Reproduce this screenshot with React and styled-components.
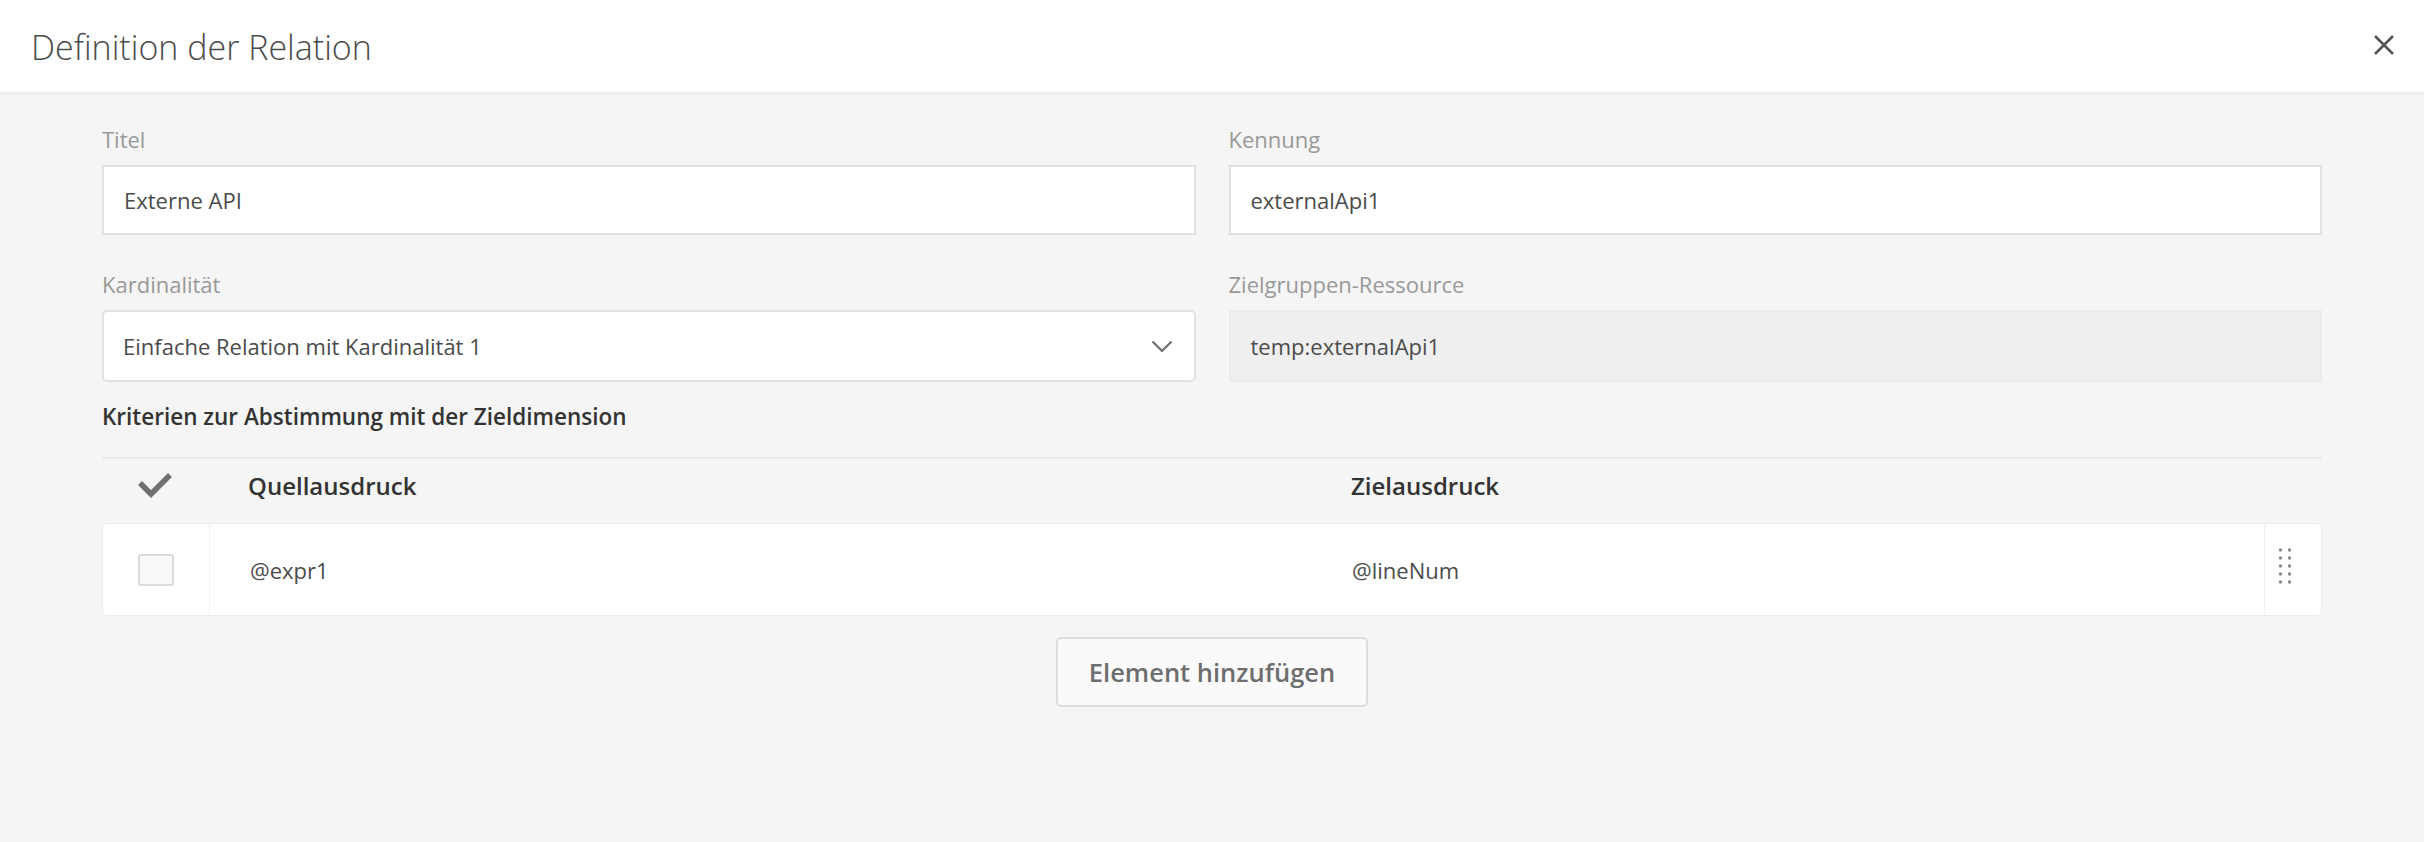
import React from "react";
import styled, { createGlobalStyle } from "styled-components";

const GlobalStyle = createGlobalStyle`
  * { box-sizing: border-box; }
  html, body {
    margin: 0;
    padding: 0;
    background: #f5f5f5;
  }
  body {
    font-family: "Open Sans", "Noto Sans", sans-serif;
    color: #4b4b4b;
  }
`;

const columns = [
  { key: "source", title: "Quellausdruck" },
  { key: "target", title: "Zielausdruck" },
];

const rows = [{ id: 1, source: "@expr1", target: "@lineNum" }];

const CloseIcon = () => (
  <svg width="22" height="22" viewBox="0 0 22 22">
    <path d="M2 2 L20 20 M20 2 L2 20" stroke="#555" strokeWidth="2.6" fill="none" />
  </svg>
);

const Chevron = () => (
  <svg width="22" height="13" viewBox="0 0 22 13">
    <path d="M1.5 1.5 L11 11 L20.5 1.5" stroke="#6e6e6e" strokeWidth="2.2" fill="none" />
  </svg>
);

const CheckMark = () => (
  <svg width="34" height="25" viewBox="0 0 34 25">
    <path d="M2 10 L13 21 L32 2" stroke="#707070" strokeWidth="5.5" fill="none" />
  </svg>
);

const DragHandle = () => (
  <svg width="14" height="40" viewBox="0 0 14 40">
    {[4, 12, 20, 28, 36].map((y) => (
      <g key={y} fill="#8a8a8a">
        <circle cx="2.5" cy={y} r="1.7" />
        <circle cx="11.5" cy={y} r="1.7" />
      </g>
    ))}
  </svg>
);

const App = () => {
  return (
    <Page>
      <GlobalStyle />
      <Header>
        <Title>Definition der Relation</Title>
        <CloseButton aria-label="Schließen">
          <CloseIcon />
        </CloseButton>
      </Header>

      <Body>
        <FieldGrid>
          <Field>
            <Label>Titel</Label>
            <TextInput defaultValue="Externe API" />
          </Field>
          <Field>
            <Label>Kennung</Label>
            <TextInput defaultValue="externalApi1" />
          </Field>
          <Field>
            <Label>Kardinalität</Label>
            <SelectBox>
              <span>Einfache Relation mit Kardinalität 1</span>
              <Chevron />
            </SelectBox>
          </Field>
          <Field>
            <Label>Zielgruppen-Ressource</Label>
            <ReadOnlyBox>temp:externalApi1</ReadOnlyBox>
          </Field>
        </FieldGrid>

        <SectionTitle>Kriterien zur Abstimmung mit der Zieldimension</SectionTitle>

        <Table>
          <HeaderRow>
            <CheckCell>
              <CheckMark />
            </CheckCell>
            {columns.map((col) => (
              <HeaderCell key={col.key}>{col.title}</HeaderCell>
            ))}
            <span />
          </HeaderRow>

          {rows.map((row) => (
            <Row key={row.id}>
              <CheckCell>
                <Checkbox />
              </CheckCell>
              <Cell divider>{row.source}</Cell>
              <Cell>{row.target}</Cell>
              <HandleCell divider>
                <DragHandle />
              </HandleCell>
            </Row>
          ))}
        </Table>

        <ButtonRow>
          <AddButton>Element hinzufügen</AddButton>
        </ButtonRow>
      </Body>
    </Page>
  );
};

const Page = styled.div`
  min-height: 100vh;
  background: #f5f5f5;
`;

const Header = styled.header`
  display: flex;
  align-items: center;
  justify-content: space-between;
  height: 95px;
  padding: 2px 29px 0 31px;
  background: #fff;
  border-bottom: 3px solid #ececec;
`;

const Title = styled.h1`
  margin: 0;
  font-size: 34px;
  font-weight: 300;
  line-height: 40px;
  color: #4b4b4b;
`;

const CloseButton = styled.button`
  display: flex;
  padding: 0;
  border: none;
  background: none;
  margin-top: -4px;
`;

const Body = styled.main`
  padding: 29px 102px 0;
`;

const FieldGrid = styled.div`
  display: grid;
  grid-template-columns: 1fr 1fr;
  column-gap: 33px;
  row-gap: 34px;
`;

const Field = styled.div`
  display: flex;
  flex-direction: column;
  gap: 11px;
`;

const Label = styled.label`
  font-size: 22px;
  line-height: 30px;
  color: #999;
`;

const TextInput = styled.input`
  height: 70px;
  padding: 0 20px;
  border: 2px solid #e1e1e1;
  border-radius: 0;
  background: #fff;
  font-family: inherit;
  font-size: 22px;
  color: #4b4b4b;
  outline: none;
`;

const SelectBox = styled.div`
  display: flex;
  align-items: center;
  justify-content: space-between;
  height: 72px;
  padding: 0 21px 0 19px;
  border: 2px solid #e1e1e1;
  border-radius: 5px;
  background: #fff;
  font-size: 22px;
  color: #4b4b4b;
`;

const ReadOnlyBox = styled.div`
  display: flex;
  align-items: center;
  height: 72px;
  padding: 0 20px;
  border: 2px solid #ebebeb;
  background: #efefef;
  font-size: 22px;
  color: #4b4b4b;
`;

const SectionTitle = styled.h2`
  margin: 20px 0 0;
  font-size: 22.5px;
  font-weight: 600;
  line-height: 30px;
  color: #333;
`;

const Table = styled.div`
  margin-top: 25px;
`;

const gridColumns = "106px 1103px 1fr 57px";

const HeaderRow = styled.div`
  display: grid;
  grid-template-columns: ${gridColumns};
  align-items: center;
  height: 66px;
  padding-bottom: 11px;
  border-top: 2px solid #e9e9e9;
`;

const HeaderCell = styled.div`
  padding-left: 40px;
  font-size: 24px;
  font-weight: 600;
  color: #333;
`;

const Row = styled.div`
  display: grid;
  grid-template-columns: ${gridColumns};
  height: 93px;
  background: #fff;
  border: 1px solid #ececec;
  border-radius: 5px;
`;

const Cell = styled.div`
  display: flex;
  align-items: center;
  padding-left: 40px;
  font-size: 22px;
  color: #4b4b4b;
  border-left: ${({ divider }) => (divider ? "1px solid #f1f1f1" : "none")};
`;

const CheckCell = styled.div`
  display: flex;
  align-items: center;
  justify-content: center;
  height: 100%;
`;

const HandleCell = styled.div`
  display: flex;
  align-items: center;
  padding: 0 0 7px 13px;
  border-left: ${({ divider }) => (divider ? "1px solid #f1f1f1" : "none")};
`;

const Checkbox = styled.span`
  display: block;
  width: 36px;
  height: 32px;
  border: 2px solid #dcdcdc;
  border-radius: 2px;
  background: #f9f9f9;
`;

const ButtonRow = styled.div`
  display: flex;
  justify-content: center;
  padding-top: 21px;
`;

const AddButton = styled.button`
  width: 312px;
  height: 70px;
  border: 2px solid #dcdcdc;
  border-radius: 5px;
  background: #fafafa;
  font-family: inherit;
  font-size: 25.5px;
  font-weight: 600;
  color: #6e6e6e;
`;

export default App;
